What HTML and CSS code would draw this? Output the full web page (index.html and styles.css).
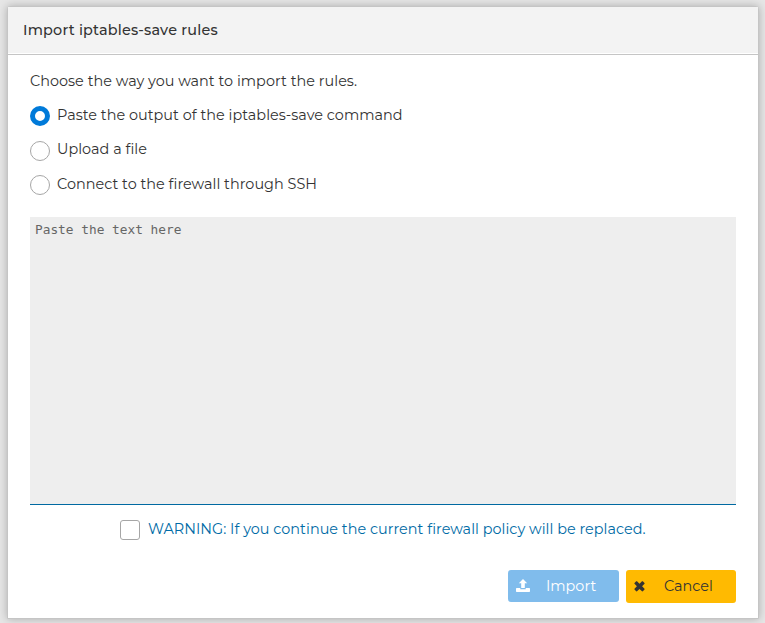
FILE: index.html
```html
<!DOCTYPE html>
<html lang="en">
<head>
<meta charset="utf-8">
<title>Import iptables-save rules</title>
<link rel="stylesheet" href="styles.css">
</head>
<body>
<section class="dialog">
  <header class="dialog-header">Import iptables-save rules</header>
  <div class="dialog-body">
    <p class="intro">Choose the way you want to import the rules.</p>
    <label class="option"><span class="radio checked"></span><span>Paste the output of the iptables-save command</span></label>
    <label class="option upload"><span class="radio"></span><span>Upload a file</span></label>
    <label class="option"><span class="radio"></span><span>Connect to the firewall through SSH</span></label>
    <textarea class="paste-area" placeholder="Paste the text here"></textarea>
    <label class="warning"><span class="checkbox"></span><span>WARNING: If you continue the current firewall policy will be replaced.</span></label>
    <footer class="actions">
      <button class="button import" disabled>
        <svg class="icon" width="14" height="14" viewBox="0 0 14 14" fill="currentColor"><path d="M7 0l4.2 4.300H8.800V9H5.200V4.300H2.800zM.7 9H4.300v1.200h5.400V9h3.600q.7 0 .7.700v2.600q0 .7-.7.700H.7q-.7 0-.7-.7V9.700Q0 9 .7 9z"/></svg>
        <span>Import</span>
      </button>
      <button class="button cancel">
        <svg class="icon" width="11" height="11" viewBox="0 0 11 11" fill="currentColor"><path d="M2.200.300Q2.600 0 3 .300l2.500 2.500L8 .300q.4-.3.800 0l1.700 1.700q.3.400 0 .8L8.100 5.300l2.400 2.500q.3.400 0 .8l-1.700 1.700q-.4.300-.8 0L5.500 7.900 3 10.300q-.4.300-.8 0L.5 8.600q-.3-.4 0-.8l2.400-2.500L.5 2.800q-.3-.4 0-.8z"/></svg>
        <span>Cancel</span>
      </button>
    </footer>
  </div>
</section>
</body>
</html>
```

FILE: styles.css
```css
* { box-sizing: border-box; }
body {
  margin: 0;
  height: 623px;
  padding: 6px 6px 4px 7px;
  overflow: hidden;
  background: #e6e6e6;
  color: #333;
  font: 400 14.4px/20px Montserrat, Inter, sans-serif;
  letter-spacing: .025px;
  white-space: nowrap;
}
.dialog {
  height: 613px;
  background: #fff;
  border: 1px solid #c5c5c5;
  border-radius: 3px 3px 0 0;
  box-shadow: 0 0 8px rgba(0, 0, 0, .25);
}
.dialog-header {
  height: 48px;
  padding: 13px 15px 0;
  background: #f3f3f3;
  border-bottom: 1px solid #c5c5c5;
  box-shadow: inset 0 -1px #fff;
  font-weight: 500;
  letter-spacing: .19px;
}
.dialog-body { padding: 16px 22px 0; }
.intro { margin: 0 0 14px; height: 20px; }
.option { display: flex; height: 20px; margin-bottom: 14px; gap: 7px; align-items: center; }
.option.upload { margin: 0 0 15px; }
.radio {
  width: 20px;
  height: 20px;
  border: 1px solid #a6a6a6;
  border-radius: 50%;
  background: #fff;
  position: relative;
  top: 1px;
}
.upload .radio { top: 2px; }
.radio.checked { border: 5px solid #007ad9; }
.paste-area {
  display: block;
  width: 706px;
  height: 288px;
  margin: 23px 0 0;
  padding: 5px;
  resize: none;
  border: 0;
  border-bottom: 1px solid #0069a1;
  background: #eee;
  font: 12.8px/15px "DejaVu Sans Mono", monospace;
}
.paste-area::placeholder { color: #666; }
.warning { display: flex; gap: 8px; align-items: center; margin: 15px 0 0 90px; height: 20px; color: #006ba6; }
.warning > span:last-child { margin-top: -2px; }
.checkbox { width: 20px; height: 20px; border: 1px solid #a6a6a6; border-radius: 3px; }
.actions { display: flex; justify-content: flex-end; align-items: flex-start; gap: 7px; margin-top: 30px; }
.button {
  display: flex;
  align-items: center;
  border: 0;
  border-radius: 3px;
  font: inherit;
  color: #333;
  height: 33px;
  padding: 0 8px;
}
.import { width: 111px; height: 32px; background: #80bcec; color: #fff; }
.import .icon { margin-right: 16px; }
.cancel { width: 110px; background: #ffba01; }
.cancel .icon { margin-right: 19px; }
.cancel span { margin-top: -2px; }
.button .icon { flex: none; }
```
